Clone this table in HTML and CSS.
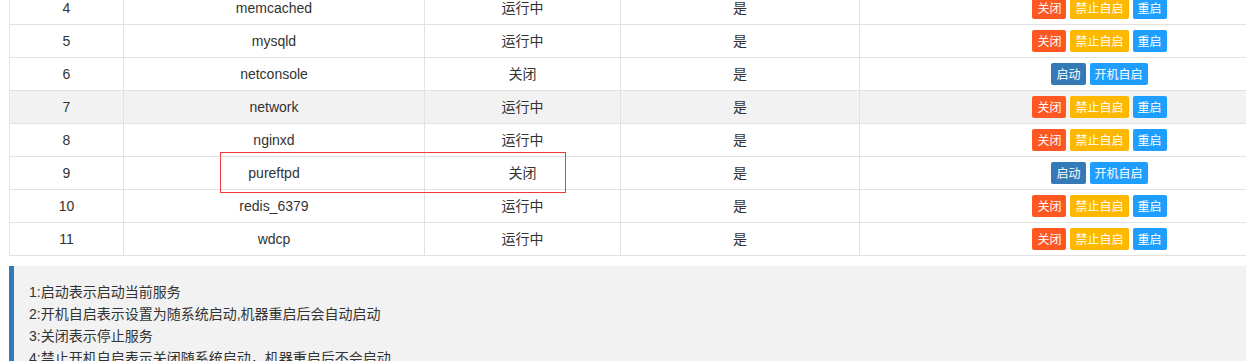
FILE: index.html
```html
<!DOCTYPE html>
<html lang="zh-CN">
<head>
    <meta charset="UTF-8">
    <title>服务管理</title>
    <link rel="stylesheet" href="styles.css">
</head>
<body>

<div class="page">
    <table class="svc-table">
        <colgroup>
            <col class="c-id">
            <col class="c-name">
            <col class="c-state">
            <col class="c-boot">
            <col class="c-ops">
        </colgroup>
        <tbody id="svc-body"></tbody>
    </table>

    <!-- 标注框 -->
    <div class="mark"></div>

    <blockquote class="notice">
        1:启动表示启动当前服务<br>
        2:开机自启表示设置为随系统启动,机器重启后会自动启动<br>
        3:关闭表示停止服务<br>
        4:禁止开机自启表示关闭随系统启动，机器重启后不会启动
    </blockquote>
</div>

<script>
    const services = [
        { id: 4, name: 'memcached', running: true },
        { id: 5, name: 'mysqld', running: true },
        { id: 6, name: 'netconsole', running: false },
        { id: 7, name: 'network', running: true, hover: true },
        { id: 8, name: 'nginxd', running: true },
        { id: 9, name: 'pureftpd', running: false },
        { id: 10, name: 'redis_6379', running: true },
        { id: 11, name: 'wdcp', running: true }
    ];

    function buttons(svc) {
        if (svc.running) {
            return '<span class="btn btn-danger">关闭</span>' +
                   '<span class="btn btn-warm">禁止自启</span>' +
                   '<span class="btn btn-normal">重启</span>';
        }
        return '<span class="btn btn-primary">启动</span>' +
               '<span class="btn btn-normal">开机自启</span>';
    }

    const tbody = document.getElementById('svc-body');
    services.forEach(svc => {
        const tr = document.createElement('tr');
        if (svc.hover) tr.classList.add('hover');
        tr.innerHTML =
            '<td>' + svc.id + '</td>' +
            '<td>' + svc.name + '</td>' +
            '<td>' + (svc.running ? '运行中' : '关闭') + '</td>' +
            '<td>是</td>' +
            '<td class="ops">' + buttons(svc) + '</td>';
        tbody.appendChild(tr);
    });
</script>

</body>
</html>
```

FILE: styles.css
```css
html, body {
    margin: 0;
    overflow: hidden;
    background-color: #fff;
}

body {
    font-family: 'Liberation Sans', 'Noto Sans CJK SC', sans-serif;
    font-size: 14px;
    color: #333;
}

.page {
    position: relative;
    width: 1340px;
    padding-left: 9px;
    margin-top: -9px;
}

.svc-table {
    width: 1331px;
    border-collapse: collapse;
    table-layout: fixed;
    margin: 0 0 10px 0;
}

.c-id { width: 114px; }
.c-name { width: 301px; }
.c-state { width: 196px; }
.c-boot { width: 239px; }

.svc-table td {
    border: 1px solid #e2e2e2;
    padding: 5px 0;
    height: 22px;
    line-height: 22px;
    text-align: center;
    white-space: nowrap;
}

.svc-table tr.hover td {
    background-color: #f2f2f2;
}

.ops {
    font-size: 0;
}

.btn {
    display: inline-block;
    height: 22px;
    line-height: 22px;
    padding: 0 5px;
    margin: 0 2px;
    font-size: 12px;
    color: #fff;
    border-radius: 2px;
    vertical-align: top;
    font-family: 'Noto Sans CJK SC', sans-serif;
}

.btn-danger { background-color: #ff5722; }
.btn-warm { background-color: #ffb800; }
.btn-normal { background-color: #1e9fff; }
.btn-primary { background-color: #337ab7; }

.mark {
    position: absolute;
    left: 220px;
    top: 161px;
    width: 344px;
    height: 39px;
    border: 1px solid #ee3b3b;
}

.notice {
    margin: 0;
    width: 1311px;
    padding: 15px;
    line-height: 22px;
    border-left: 5px solid #337ab7;
    border-radius: 0 2px 2px 0;
    background-color: #f2f2f2;
    font-family: 'Liberation Sans', 'Noto Sans CJK SC', sans-serif;
}
```
